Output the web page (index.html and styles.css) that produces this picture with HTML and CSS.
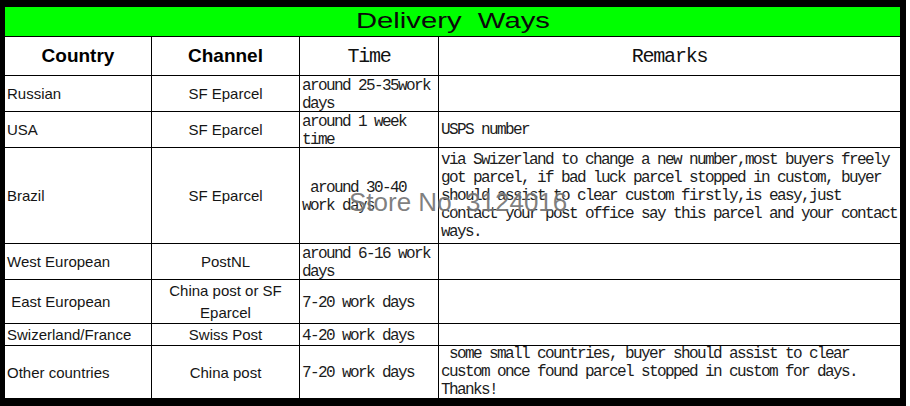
FILE: index.html
```html
<!DOCTYPE html>
<html lang="en">
<head>
<meta charset="utf-8">
<title>Delivery Ways</title>
<link rel="stylesheet" href="styles.css">
</head>
<body>
<div class="sheet">
  <div class="title"><span class="title-text">Delivery  Ways</span></div>
  <div class="grid">
    <div class="cell head sans-head">Country</div>
    <div class="cell head sans-head">Channel</div>
    <div class="cell head mono-head">Time</div>
    <div class="cell head mono-head last-col">Remarks</div>

    <div class="cell country">Russian</div>
    <div class="cell channel">SF Eparcel</div>
    <div class="cell time"><span>around 25-35work<br>days</span></div>
    <div class="cell remarks last-col"></div>

    <div class="cell country">USA</div>
    <div class="cell channel">SF Eparcel</div>
    <div class="cell time"><span>around 1 week<br>time</span></div>
    <div class="cell remarks last-col">USPS number</div>

    <div class="cell country">Brazil</div>
    <div class="cell channel">SF Eparcel</div>
    <div class="cell time"><span> around 30-40<br>work days</span></div>
    <div class="cell remarks last-col"><span>via Swizerland to change a new number,most buyers freely<br>got parcel, if bad luck parcel stopped in custom, buyer<br>should assist to clear custom firstly,is easy,just<br>contact your post office say this parcel and your contact<br>ways.</span></div>

    <div class="cell country">West European</div>
    <div class="cell channel">PostNL</div>
    <div class="cell time"><span>around 6-16 work<br>days</span></div>
    <div class="cell remarks last-col"></div>

    <div class="cell country"> East European</div>
    <div class="cell channel two-line"><span>China post or SF<br>Eparcel</span></div>
    <div class="cell time">7-20 work days</div>
    <div class="cell remarks last-col"></div>

    <div class="cell country">Swizerland/France</div>
    <div class="cell channel">Swiss Post</div>
    <div class="cell time">4-20 work days</div>
    <div class="cell remarks last-col"></div>

    <div class="cell country last-row">Other countries</div>
    <div class="cell channel last-row">China post</div>
    <div class="cell time last-row">7-20 work days</div>
    <div class="cell remarks last-col last-row"><span> some small countries, buyer should assist to clear<br>custom once found parcel stopped in custom for days.<br>Thanks!</span></div>
  </div>
  <div class="watermark">Store No: 3124016</div>
</div>
</body>
</html>
```
FILE: styles.css
```css
html, body {
  margin: 0;
  padding: 0;
  background: #ffffff;
}

.sheet {
  position: relative;
  width: 895px;
  border-style: solid;
  border-color: #000000;
  border-width: 7px 6px 8px 5px;
  background: #ffffff;
}

.title {
  height: 29px;
  border-bottom: 1px solid #000000;
  background: #00ff00;
  display: flex;
  align-items: center;
  justify-content: center;
}

.title-text {
  display: inline-block;
  font-family: "Liberation Sans", Arial, sans-serif;
  font-size: 22px;
  line-height: 26px;
  color: #0a0a0a;
  white-space: pre;
  transform: scaleX(1.33);
  margin-bottom: 2px;
}

.grid {
  display: grid;
  grid-template-columns: 147px 148px 139px 461px;
  grid-template-rows: 39px 36px 36px 96px 36px 44px 22px 52px;
}

.cell {
  box-sizing: border-box;
  border-right: 1px solid #000000;
  border-bottom: 1px solid #000000;
  display: flex;
  align-items: center;
  white-space: pre;
  min-width: 0;
}

.last-col {
  border-right: none;
}

.last-row {
  border-bottom: none;
}

.head {
  justify-content: center;
  color: #000000;
}

.sans-head {
  font-family: "Liberation Sans", Arial, sans-serif;
  font-weight: bold;
  font-size: 19px;
}

.mono-head {
  font-family: "Liberation Mono", "Courier New", monospace;
  font-size: 20px;
  letter-spacing: -1.2px;
  color: #111111;
}

.country {
  font-family: "Liberation Sans", Arial, sans-serif;
  font-size: 15px;
  color: #151515;
  padding-left: 2px;
}

.channel {
  font-family: "Liberation Sans", Arial, sans-serif;
  font-size: 15px;
  color: #151515;
  justify-content: center;
  text-align: center;
}

.two-line {
  line-height: 22px;
}

.time,
.remarks {
  font-family: "Liberation Mono", "Courier New", monospace;
  font-size: 16px;
  letter-spacing: -1.6px;
  line-height: 18px;
  color: #1c1c1c;
  padding-left: 2px;
}

.time {
  padding-top: 2px;
}

.watermark {
  position: absolute;
  left: 344px;
  top: 182px;
  font-family: "Liberation Sans", Arial, sans-serif;
  font-size: 26px;
  line-height: 26px;
  color: rgba(105, 105, 105, 0.85);
  text-shadow: 0 0 2px rgba(255, 255, 255, 0.6);
  white-space: pre;
  pointer-events: none;
}
```
